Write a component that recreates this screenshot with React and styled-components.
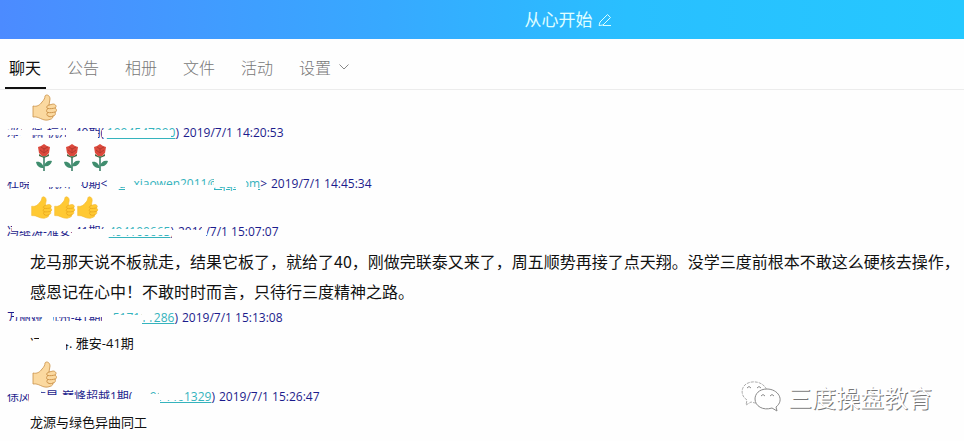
import styled, { createGlobalStyle } from 'styled-components';

const GlobalStyle = createGlobalStyle`
  * {
    box-sizing: border-box;
  }
  body {
    margin: 0;
    background: #fefefe;
    font-family: 'Open Sans', 'Noto Sans CJK SC', sans-serif;
  }
`;

const Page = styled.div`
  position: relative;
  overflow: hidden;
`;

const Header = styled.header`
  display: flex;
  align-items: center;
  justify-content: center;
  gap: 5px;
  height: 39px;
  padding-left: 172px;
  background: linear-gradient(90deg, #4c8bff 0%, #37a9ff 40%, #29bfff 65%, #25c8ff 100%);
`;

const Title = styled.h1`
  margin: 0;
  font-size: 17px;
  font-weight: 400;
  line-height: 24px;
  color: #e0ffff;
`;

const EditButton = styled.button`
  display: flex;
  padding: 0;
  border: 0;
  background: none;
`;

const Tabs = styled.nav`
  display: flex;
  align-items: flex-end;
  gap: 17px;
  height: 51px;
  padding-left: 5px;
  border-bottom: 1px solid #ececec;
`;

const Tab = styled.button`
  display: flex;
  align-items: center;
  gap: 8px;
  height: 42px;
  padding: 0 5px 0 4px;
  border: 0;
  border-bottom: 2px solid ${(p) => (p.$active ? '#111' : 'transparent')};
  background: none;
  font-family: 'Noto Sans CJK SC', sans-serif;
  font-size: 16px;
  font-weight: ${(p) => (p.$active ? 400 : 300)};
  color: ${(p) => (p.$active ? '#111' : '#777')};
`;

const Messages = styled.main`
  display: flex;
  flex-direction: column;
`;

const Meta = styled.div`
  position: relative;
  display: flex;
  height: 16px;
  padding-left: 7px;
  font-size: 12px;
  line-height: 18px;
  white-space: nowrap;
  color: #1c1c8c;
`;

const Sender = styled.span`
  display: flex;
  justify-content: space-between;
  width: ${(p) => p.$width}px;
  margin-right: 4px;
`;

const Account = styled.a`
  color: #35b3bd;
  text-decoration: underline;
`;

const Mask = styled.svg`
  position: absolute;
  left: 0;
  top: 0;
  fill: #fefefe;
`;

const Emojis = styled.div`
  display: flex;
  align-items: center;
  gap: ${(p) => p.$gap || 0}px;
  height: ${(p) => p.$height || 34}px;
  padding-left: ${(p) => p.$indent || 31}px;
`;

const Speech = styled.p`
  margin: 0;
  padding: 7px 4px 3px 30px;
  font-family: 'Noto Sans CJK SC', sans-serif;
  font-size: 16px;
  line-height: 30px;
  color: #111;
`;

const Note = styled.p`
  position: relative;
  margin: 0;
  padding: 0 0 0 30px;
  font-size: 13px;
  line-height: 36px;
  color: #111;
`;

const Watermark = styled.div`
  position: absolute;
  right: 32px;
  bottom: 25px;
  display: flex;
  align-items: center;
  gap: 6px;
  font-family: 'Noto Sans CJK SC', sans-serif;
  font-size: 24px;
  line-height: 36px;
  color: #fff;
  text-shadow: 1px 1px 0 #777;
`;

function Thumb({ pale }) {
  const fill = pale ? '#fbd9a0' : '#ffc933';
  const line = pale ? '#c98f45' : '#e8a51c';
  return (
    <svg width={pale ? 27 : 23} height={pale ? 27 : 25} viewBox="0 0 27 27" aria-label="👍">
      <path
        d="M2 12 C6 13 9 11 11 8 C13 6 14 4 14 2 C15 0 19 1 19 5 C19 7 18 9 18 11 L22 10 C25 10 26 13 24 14 C26 15 26 18 24 18 C25 20 24 22 22 22 C22 25 20 25 17 26 C11 27 8 22 2 23 Z"
        fill={fill}
        stroke={pale ? line : '#f5bb33'}
        strokeWidth="0.8"
      />
      <path
        d="M17 14.5 C19 15 22 14.5 24 14 M17 18.5 C19 19 22 18.5 24 18 M17 22 C18 23 20 23 22 22 M18 11 C15 12 15 14 17 14.5 C15 16 15 18 17 18.5 C15 20 16 22 17 22"
        fill="none"
        stroke={line}
        strokeLinecap="round"
        strokeWidth="0.9"
      />
    </svg>
  );
}

function Rose() {
  return (
    <svg width="16" height="28" viewBox="0 0 16 28" aria-label="🌹">
      <path d="M8 11 V27" stroke="#3c8068" strokeWidth="1.6" />
      <path d="M8 24 C3 24 1 22 0 18 C4 17 7 20 8 24 Z M8 22 C9 18 12 16 16 17 C15 21 12 23 8 22 Z" fill="#3f8d6e" />
      <path d="M3 10 L8 13 L13 10 L13 12 L8 14 L3 12 Z" fill="#496b45" />
      <path d="M2 3 L5 2 L8 0 L11 2 L14 3 L13 9 L10 12 H6 L3 9 Z" fill="#dc493c" />
      <path d="M5 3 L8 5 L12 3 M4 6 L8 9 L12 6 M8 5 V9" fill="none" stroke="#b23a2f" />
    </svg>
  );
}

function MessageMeta({ name, account, close = ')', width, time, mask }) {
  return (
    <Meta>
      <Sender $width={width}>
        <span>{name}</span>
        <span>
          <Account href="#">{account}</Account>
          {close}
        </span>
      </Sender>
      <time>{time}</time>
      <Mask width="300" height="18" aria-hidden="true">
        <path d={mask} />
      </Mask>
    </Meta>
  );
}

const tabs = ['聊天', '公告', '相册', '文件', '活动', '设置'];

export default function App() {
  return (
    <Page>
      <GlobalStyle />
      <Header>
        <Title>从心开始</Title>
        <EditButton aria-label="编辑">
          <svg width="14" height="14" viewBox="0 0 14 14" fill="none" stroke="#d8ffff">
            <path d="M1 12.5 L2 9 L9.5 1.5 L12.5 4.5 L5 12 Z M5 12.5 H13" />
          </svg>
        </EditButton>
      </Header>
      <Tabs>
        {tabs.map((label, i) => (
          <Tab key={label} $active={i === 0}>
            {label}
            {label === '设置' && (
              <svg width="10" height="6" viewBox="0 0 10 6" fill="none" stroke="#888">
                <path d="M0.5 0.5 L5 5 L9.5 0.5" />
              </svg>
            )}
          </Tab>
        ))}
      </Tabs>
      <Messages>
        <Emojis $height={34}>
          <Thumb pale />
        </Emojis>
        <MessageMeta
          name="邓小佩-杭州-40期("
          account="1094547290"
          width={172}
          time="2019/7/1 14:20:53"
          mask="M0 0 H102 V4 H0 Z M0 6 H72 V11 H0 Z M72 7 H98 V18 H72 Z M22 0 H31 V18 H22 Z M66 0 H76 V18 H66 Z M102 6 H171 V13 H102 Z M104 0 H176 V4 H104 Z"
        />
        <Emojis $height={35} $indent={36} $gap={12}>
          <Rose />
          <Rose />
          <Rose />
        </Emojis>
        <MessageMeta
          name="杜晓娟-杭州-40期<"
          account="duxiaowen2011@qq.com"
          close=">"
          width={260}
          time="2019/7/1 14:45:34"
          mask="M0 0 H104 V7 H0 Z M29 0 H49 V18 H29 Z M49 0 H72 V12 H49 Z M72 0 H81 V18 H72 Z M110 0 H125 V12 H110 Z M125 0 H133 V18 H125 Z M133 10 H214 V18 H133 Z M214 0 H246 V12 H214 Z M236 6 H246 V18 H236 Z M246 12 H258 V18 H246 Z"
        />
        <Emojis $height={32} $indent={30}>
          <Thumb />
          <Thumb />
          <Thumb />
        </Emojis>
        <MessageMeta
          name="冯继涛-雅安-41期("
          account="494100665"
          width={167}
          time="2019/7/1 15:07:07"
          mask="M12 0 H72 V8 H12 Z M0 13 H104 V18 H0 Z M72 6 H172 V12 H106 V18 H72 Z M104 0 H172 V4 H104 Z M172 7 H206 V18 H172 Z M200 0 H207 V12 H205 Z"
        />
        <Speech>
          龙马那天说不板就走，结果它板了，就给了40，刚做完联泰又来了，周五顺势再接了点天翔。没学三度前根本不敢这么硬核去操作，感恩记在心中！不敢时时而言，只待行三度精神之路。
        </Speech>
        <MessageMeta
          name="万丽娅-杭州-41期("
          account="517111286"
          width={171}
          time="2019/7/1 15:13:08"
          mask="M14 0 H104 V8 H14 Z M43 0 H53 V18 H43 Z M0 12 H104 V18 H0 Z M102 0 H112 V18 H102 Z M104 6 H142 V18 H104 Z M142 0 H153 V11 H142 Z"
        />
        <Note>
          冯继涛. 雅安-41期
          <Mask width="72" height="36" aria-hidden="true">
            <path d="M30 18 L34 14 L43 17 V30 H30 Z M39 8 H66 V30 H39 Z M66 8 H72 V19 H66 Z" />
          </Mask>
        </Note>
        <Emojis $height={27}>
          <Thumb pale />
        </Emojis>
        <MessageMeta
          name="徐凤 方昆-巅峰超越1期("
          account="914461329"
          width={208}
          time="2019/7/1 15:26:47"
          mask="M0 0 H30 V6 H0 Z M0 14 H150 V18 H0 Z M29 0 H41 V18 H29 Z M41 7 H76 V18 H41 Z M76 11 H156 V18 H76 Z M142 6 H160 V18 H142 Z M159 0 H184 V12 H159 Z"
        />
        <Note>龙源与绿色异曲同工</Note>
      </Messages>
      <Watermark>
        <svg width="42" height="32" viewBox="0 0 42 32" fill="#fff" stroke="#8a8a8a">
          <path
            d="M16 22 C14 22 12 21 11 21 L6 24 L7 19 C-1 14 1 2 12 1 C20 0 26 5 27 10"
            strokeDasharray="3 1"
            strokeWidth="0.7"
          />
          <path d="M27 8 C19 8 15 13 15 18 C15 25 23 30 32 27 L37 30 L36 26 C45 19 38 8 27 8 Z" />
          <path d="M7 7 Q9 4 11 7 M17 7 Q19 4 21 7 M21 15 Q23 12 25 15 M30 15 Q32 12 34 15" fill="none" />
        </svg>
        三度操盘教育
      </Watermark>
    </Page>
  );
}
